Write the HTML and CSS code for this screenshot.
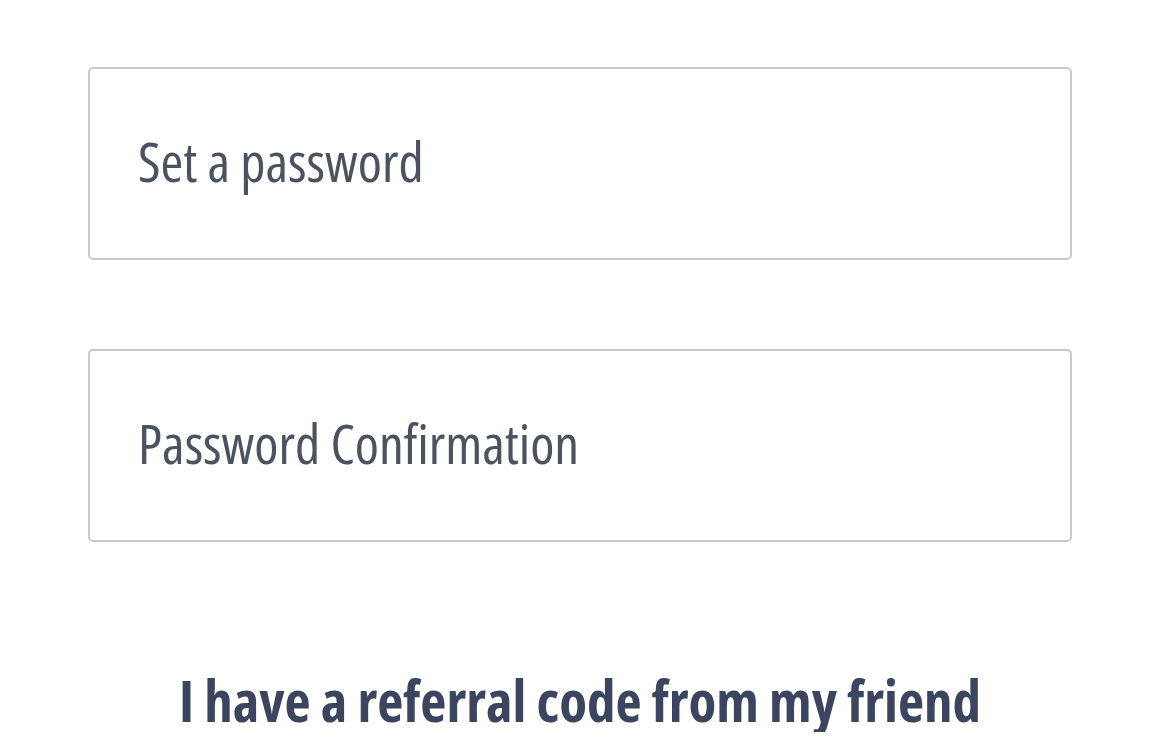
FILE: index.html
```html
<!DOCTYPE html>
<html lang="en">
<head>
    <meta charset="UTF-8">
    <meta name="viewport" content="width=device-width, initial-scale=1.0">
    <title>Sign up</title>
    <link rel="stylesheet" href="styles.css">
</head>
<body>
    <form class="signup">
        <div class="field">
            <input type="password" class="field-input" placeholder="Set a password">
        </div>
        <div class="field">
            <input type="password" class="field-input" placeholder="Password Confirmation">
        </div>
        <a class="referral" href="#">I have a referral code from my friend</a>
    </form>
</body>
</html>
```

FILE: styles.css
```css
:root {
    --text-color: #4b5361;
    --link-color: #3b4560;
    --border-color: #c9c9c9;
}

* {
    box-sizing: border-box;
    margin: 0;
    padding: 0;
}

body {
    font-family: "Open Sans", "Roboto Condensed", sans-serif;
    font-stretch: condensed;
    background-color: #ffffff;
    padding: 67px 88px 0;
}

.signup {
    display: flex;
    flex-direction: column;
}

.field {
    margin-bottom: 89px;
}

.field-input {
    display: block;
    width: 100%;
    height: 193px;
    padding: 0 48px 6px;
    font-family: inherit;
    font-stretch: condensed;
    font-size: 55px;
    color: var(--text-color);
    border: 2px solid var(--border-color);
    border-radius: 5px;
    background-color: #ffffff;
    outline: none;
}

.field-input::placeholder {
    color: var(--text-color);
    opacity: 1;
}

.referral {
    align-self: center;
    margin-top: 38px;
    font-size: 57px;
    line-height: 1.1;
    font-weight: 700;
    color: var(--link-color);
    text-decoration: none;
    white-space: nowrap;
}
```
